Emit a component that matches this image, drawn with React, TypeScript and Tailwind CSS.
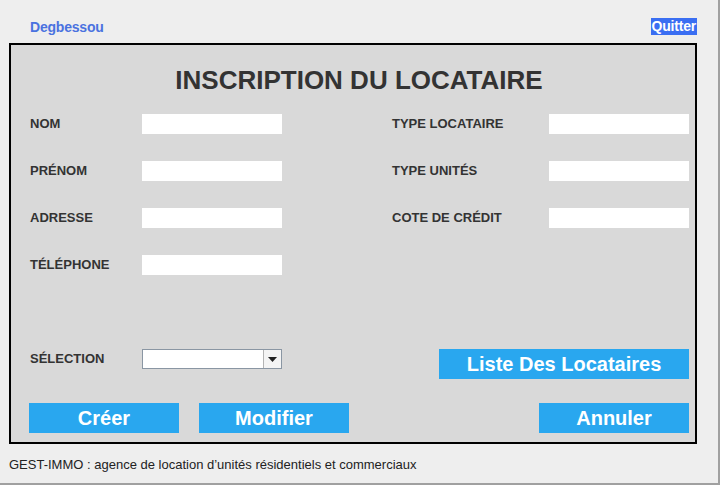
import React from 'react';

const font = { fontFamily: '"Liberation Sans", Arial, sans-serif' };

function Field({ label, labelW }: { label: string; labelW: string }) {
  return (
    <div className="flex items-center h-[20px]">
      <span className={`${labelW} text-[13px] font-bold text-[#333333]`}>{label}</span>
      <div className="w-[140px] h-[20px] bg-white" />
    </div>
  );
}

function BlueButton({ label, w }: { label: string; w: string }) {
  return (
    <button className={`${w} h-[30px] bg-[#29a7ef] text-white font-bold text-[20px] flex items-center justify-center`}>
      {label}
    </button>
  );
}

export default function App() {
  return (
    <div className="w-[720px] h-[485px] bg-[#eeeeee] border-r-2 border-b-2 border-[#a0a0a0] flex flex-col" style={font}>
      {/* Header */}
      <div className="h-[43px] flex items-start justify-between pt-[18px] pl-[30px] pr-[21px]">
        <span className="text-[14px] font-bold text-[#4a72e0] leading-[18px] tracking-[-0.2px]">
          Degbessou
        </span>
        <span className="bg-[#3a6ef2] text-white text-[14px] font-bold leading-[17px] tracking-[-0.2px] px-[1px]">
          Quitter
        </span>
      </div>

      {/* Main panel */}
      <div className="ml-[9px] w-[688px] h-[401px] border-2 border-black bg-[#d9d9d9] flex flex-col">
        <h1 className="text-center text-[26px] font-bold text-[#333333] mt-[20px] leading-[30px] pl-[12px]">
          INSCRIPTION DU LOCATAIRE
        </h1>

        <div className="flex mt-[19px] pl-[19px]">
          <div className="flex flex-col gap-[27px] w-[362px]">
            <Field label="NOM" labelW="w-[112px]" />
            <Field label="PRÉNOM" labelW="w-[112px]" />
            <Field label="ADRESSE" labelW="w-[112px]" />
            <Field label="TÉLÉPHONE" labelW="w-[112px]" />
          </div>
          <div className="flex flex-col gap-[27px]">
            <Field label="TYPE LOCATAIRE" labelW="w-[157px]" />
            <Field label="TYPE UNITÉS" labelW="w-[157px]" />
            <Field label="COTE DE CRÉDIT" labelW="w-[157px]" />
          </div>
        </div>

        <div className="flex items-start mt-[74px] pl-[19px] pr-[6px] justify-between">
          <div className="flex items-center h-[20px]">
            <span className="w-[112px] text-[13px] font-bold text-[#333333]">SÉLECTION</span>
            <div className="w-[140px] h-[20px] flex border border-[#8a96a3] bg-white">
              <div className="flex-1 border-r border-[#b4b4b4]" />
              <div className="w-[17px] bg-[#f4f4f4] flex items-center justify-center">
                <svg width="9" height="5" viewBox="0 0 9 5">
                  <path d="M0 0h9L4.5 5z" fill="#222" />
                </svg>
              </div>
            </div>
          </div>
          <BlueButton label="Liste Des Locataires" w="w-[250px]" />
        </div>

        <div className="flex mt-[24px] pl-[18px] pr-[6px]">
          <BlueButton label="Créer" w="w-[150px]" />
          <div className="w-[20px]" />
          <BlueButton label="Modifier" w="w-[150px]" />
          <div className="flex-1" />
          <BlueButton label="Annuler" w="w-[150px]" />
        </div>
      </div>

      {/* Footer */}
      <div className="pl-[9px] mt-[14px] text-[13px] text-[#222222] leading-[14px]">
        GEST-IMMO : agence de location d’unités résidentiels et commerciaux
      </div>
    </div>
  );
}
